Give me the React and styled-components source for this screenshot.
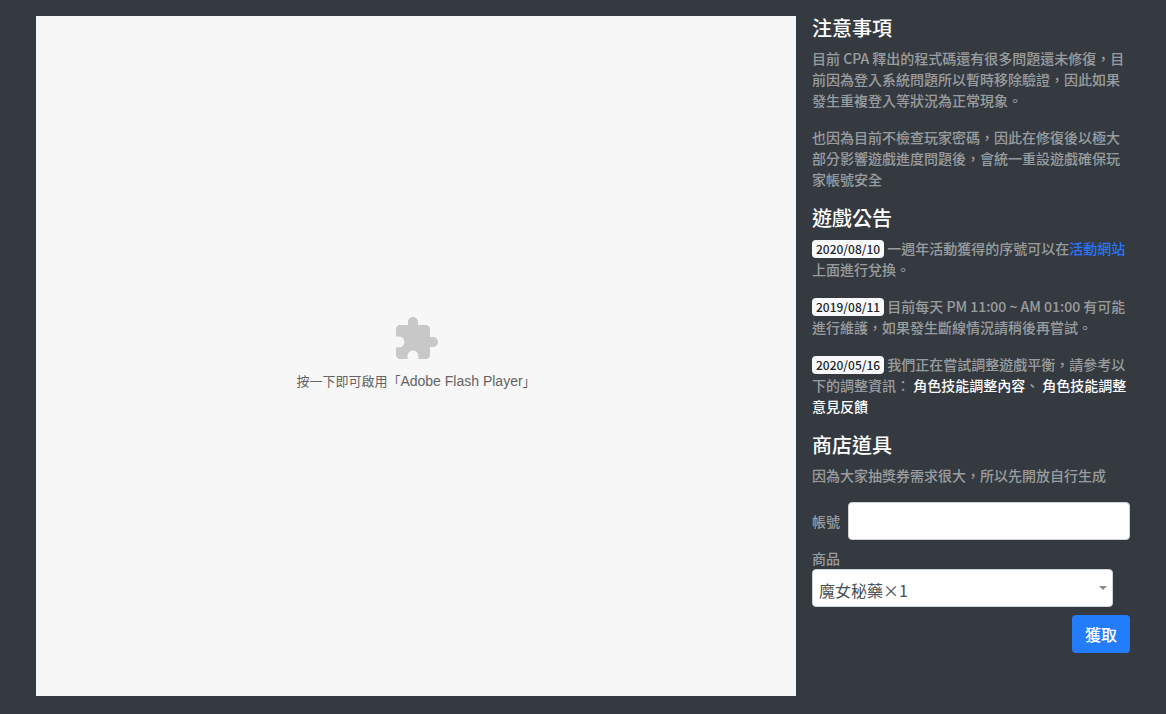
import React, { useState } from 'react';
import styled, { createGlobalStyle } from 'styled-components';

const GlobalStyle = createGlobalStyle`
  *,
  *::before,
  *::after {
    box-sizing: border-box;
  }

  body {
    margin: 0;
    background-color: #343a40;
    color: #ffffff;
    font-family: 'Noto Sans CJK TC', sans-serif;
    font-size: 14px;
    font-weight: 500;
    line-height: 21px;
  }
`;

const Page = styled.div`
  display: flex;
  align-items: flex-start;
  gap: 16px;
  padding: 16px 36px;
`;

const FlashPlaceholder = styled.button`
  display: flex;
  flex: 0 0 auto;
  flex-direction: column;
  align-items: center;
  justify-content: center;
  gap: 8px;
  width: 760px;
  height: 680px;
  padding: 0 0 6px;
  border: none;
  background-color: #f7f7f7;
  color: #646464;
  font-family: 'Liberation Sans', 'Noto Sans CJK TC', sans-serif;
  font-size: 13px;
  font-weight: 400;
  line-height: 20px;
  cursor: pointer;
`;

const PluginName = styled.span`
  font-size: 14px;
`;

const Sidebar = styled.aside`
  flex: 1 1 0;
  min-width: 0;
`;

const Title = styled.h5`
  margin: 0 0 8px;
  font-size: 20px;
  font-weight: 500;
  line-height: 24px;
`;

const Text = styled.p`
  margin: 0 0 16px;
  color: rgba(255, 255, 255, 0.5);
`;

const Badge = styled.span`
  display: inline-block;
  padding: 3px 4px;
  border-radius: 4px;
  background-color: #f8f9fa;
  color: #212529;
  font-size: 12px;
  line-height: 12px;
  vertical-align: baseline;
`;

const TextLink = styled.a`
  color: ${(props) => (props.$light ? '#ffffff' : '#2b74ff')};
  text-decoration: none;

  &:hover {
    text-decoration: underline;
  }
`;

const Form = styled.form`
  display: flex;
  flex-direction: column;
  gap: 8px;
`;

const InlineField = styled.div`
  display: flex;
  align-items: center;
  gap: 8px;
`;

const Label = styled.label`
  display: block;
  flex-shrink: 0;
  color: rgba(255, 255, 255, 0.5);
`;

const Input = styled.input`
  flex: 1;
  min-width: 0;
  height: 38px;
  padding: 6px 12px;
  border: 1px solid #ced4da;
  border-radius: 4px;
  background-color: #ffffff;
  color: #495057;
  font: inherit;
  font-size: 16px;
`;

const SelectField = styled.div`
  padding-right: 17px;
`;

const SelectBox = styled.div`
  position: relative;
`;

const Select = styled.select`
  display: block;
  width: 100%;
  height: 38px;
  padding: 3px 24px 0 6px;
  border: 1px solid #ced4da;
  border-radius: 4px;
  background-color: #ffffff;
  color: #495057;
  font-family: inherit;
  font-size: 16px;
  font-weight: 400;
  appearance: none;
`;

const Caret = styled.span`
  position: absolute;
  top: 17px;
  right: 6px;
  border-width: 4px 4px 0;
  border-style: solid;
  border-color: #888888 transparent transparent;
  pointer-events: none;
`;

const SubmitButton = styled.button`
  align-self: flex-end;
  height: 38px;
  padding: 0 13px;
  border: none;
  border-radius: 4px;
  background-color: #237dfb;
  color: #ffffff;
  font-family: inherit;
  font-size: 16px;
  font-weight: 500;
  line-height: 24px;
  cursor: pointer;

  &:hover {
    background-color: #0069d9;
  }
`;

const PuzzleIcon = () => (
  <svg width="48" height="48" viewBox="0 0 24 24" fill="#c8c8c8" aria-hidden="true">
    <path d="M20.5 11H19V7c0-1.1-.9-2-2-2h-4V3.5C13 2.12 11.88 1 10.5 1S8 2.12 8 3.5V5H4c-1.1 0-1.99.9-1.99 2v3.8H3.5c1.49 0 2.7 1.21 2.7 2.7s-1.21 2.7-2.7 2.7H2V20c0 1.1.9 2 2 2h3.8v-1.5c0-1.49 1.21-2.7 2.7-2.7 1.49 0 2.7 1.21 2.7 2.7V22H17c1.1 0 2-.9 2-2v-4h1.5c1.38 0 2.5-1.12 2.5-2.5S21.88 11 20.5 11z" />
  </svg>
);

const App = () => {
  const [account, setAccount] = useState('');
  const [item, setItem] = useState('potion');

  return (
    <>
      <GlobalStyle />
      <Page>
        <FlashPlaceholder type="button">
          <PuzzleIcon />
          <span>
            按一下即可啟用「<PluginName>Adobe Flash Player</PluginName>」
          </span>
        </FlashPlaceholder>
        <Sidebar>
          <Title>注意事項</Title>
          <Text>
            目前 CPA 釋出的程式碼還有很多問題還未修復，目前因為登入系統問題所以暫時移除驗證，因此如果發生重複登入等狀況為正常現象。
          </Text>
          <Text>
            也因為目前不檢查玩家密碼，因此在修復後以極大部分影響遊戲進度問題後，會統一重設遊戲確保玩家帳號安全
          </Text>

          <Title>遊戲公告</Title>
          <Text>
            <Badge>2020/08/10</Badge> 一週年活動獲得的序號可以在<TextLink href="#event">活動網站</TextLink>上面進行兌換。
          </Text>
          <Text>
            <Badge>2019/08/11</Badge> 目前每天 PM 11:00 ~ AM 01:00 有可能進行維護，如果發生斷線情況請稍後再嘗試。
          </Text>
          <Text>
            <Badge>2020/05/16</Badge> 我們正在嘗試調整遊戲平衡，請參考以下的調整資訊：{' '}
            <TextLink $light href="#skills">角色技能調整內容</TextLink>、{' '}
            <TextLink $light href="#feedback">角色技能調整意見反饋</TextLink>
          </Text>

          <Title>商店道具</Title>
          <Text>因為大家抽獎券需求很大，所以先開放自行生成</Text>
          <Form onSubmit={(e) => e.preventDefault()}>
            <InlineField>
              <Label htmlFor="account">帳號</Label>
              <Input
                id="account"
                type="text"
                value={account}
                onChange={(e) => setAccount(e.target.value)}
              />
            </InlineField>
            <SelectField>
              <Label htmlFor="item">商品</Label>
              <SelectBox>
                <Select id="item" value={item} onChange={(e) => setItem(e.target.value)}>
                  <option value="potion">魔女秘藥×1</option>
                </Select>
                <Caret />
              </SelectBox>
            </SelectField>
            <SubmitButton type="submit">獲取</SubmitButton>
          </Form>
        </Sidebar>
      </Page>
    </>
  );
};

export default App;
